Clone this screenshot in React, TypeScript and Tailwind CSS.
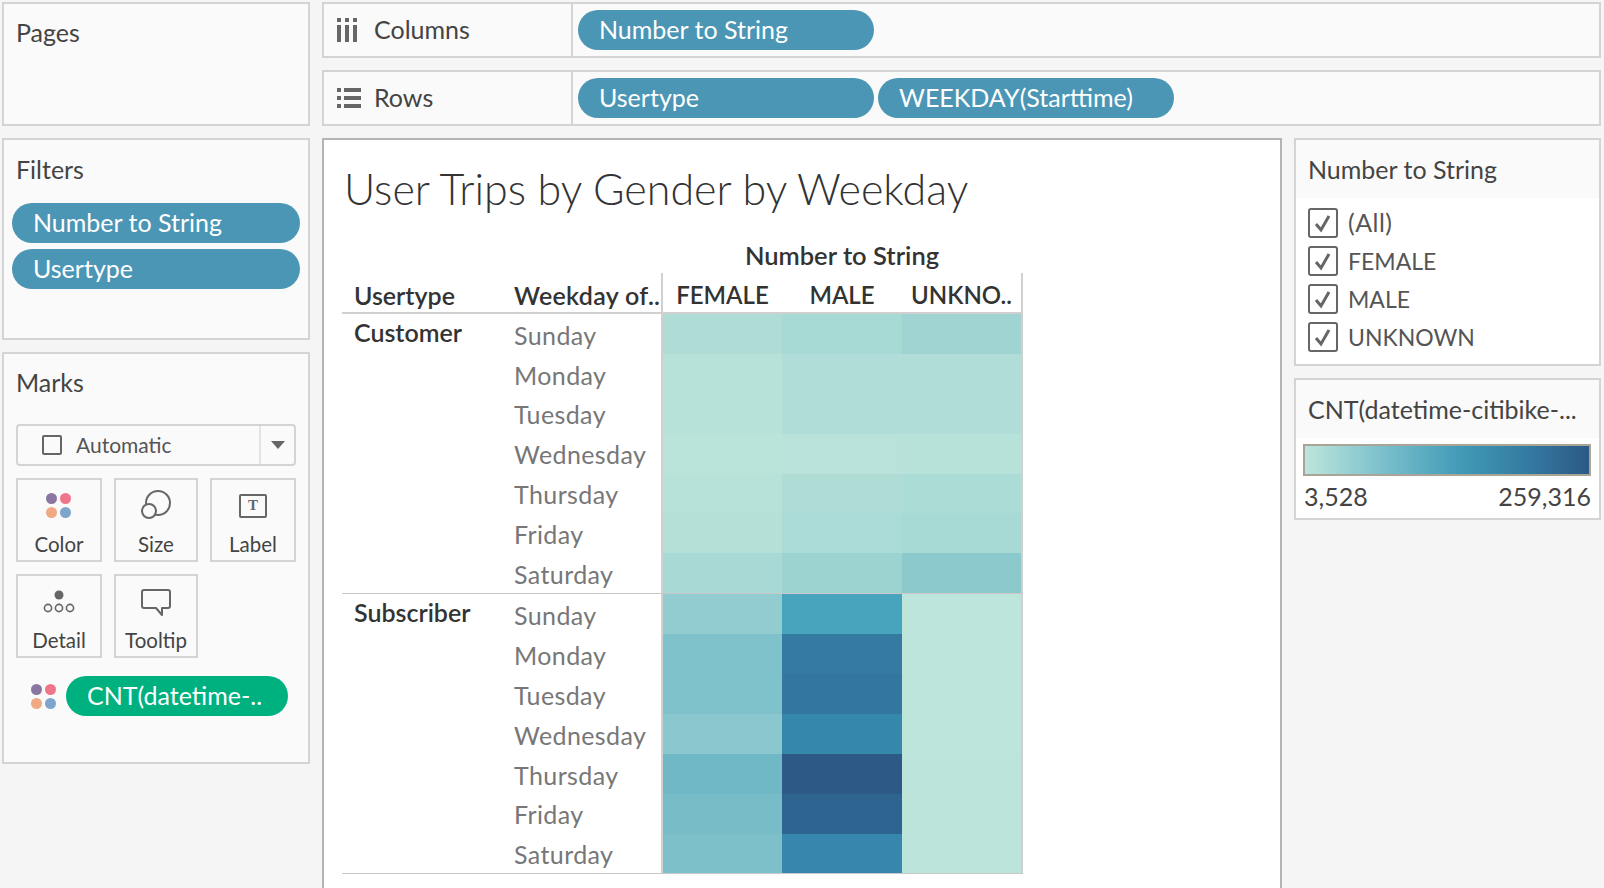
const FONT = "font-['Lato','Noto_Sans',sans-serif]"

const DAYS = ['Sunday', 'Monday', 'Tuesday', 'Wednesday', 'Thursday', 'Friday', 'Saturday']

const GROUPS = [
  {
    name: 'Customer',
    female: ['#b0dcd6', '#b7e2d9', '#b7e2d9', '#bae4da', '#b7e2d9', '#b5e0d8', '#a8d9d5'],
    male: ['#a7d9d5', '#b1ddd8', '#b1ddd8', '#b8e2da', '#b0dcd6', '#aadbd6', '#9cd3d1'],
    unknown: ['#9fd4d2', '#b1ddd8', '#b1ddd8', '#b7e2d9', '#acdcd6', '#a7d9d5', '#8cc9cd'],
  },
  {
    name: 'Subscriber',
    female: ['#92cbd0', '#80c2cb', '#80c2cb', '#8bc7cf', '#70b8c6', '#78bcc8', '#7dc0ca'],
    male: ['#48a3bc', '#357aa0', '#33779f', '#3688aa', '#2c5986', '#2e6590', '#3686ae'],
    unknown: ['#bde5db', '#bde5db', '#bde5db', '#bde5db', '#bce4da', '#bce4da', '#bce4da'],
  },
]

function Pill({ label, className }: { label: string; className: string }) {
  return (
    <div className={`flex h-10 items-center rounded-full bg-[#4b96b5] pl-[21px] text-[25px] text-white ${className}`}>
      {label}
    </div>
  )
}

function Dots({ className }: { className?: string }) {
  return (
    <svg width="26" height="26" viewBox="0 0 26 26" className={className}>
      <circle cx="6.5" cy="6.5" r="5.5" fill="#8b76a3" />
      <circle cx="20.5" cy="6.5" r="5.5" fill="#f0758a" />
      <circle cx="6.5" cy="20.5" r="5.5" fill="#f1a983" />
      <circle cx="20.5" cy="20.5" r="5.5" fill="#7ea6cc" />
    </svg>
  )
}

function MarkButton({ label, icon, width }: { label: string; icon: React.ReactNode; width: string }) {
  return (
    <div className={`flex h-[84px] flex-col items-center border-2 border-[#d4d4d4] ${width}`}>
      <div className="flex h-[42px] items-end justify-center">{icon}</div>
      <div className="mt-[11px] text-[20.5px] text-[#444]">{label}</div>
    </div>
  )
}

function Shelf({ icon, label, children }: { icon: React.ReactNode; label: string; children: React.ReactNode }) {
  return (
    <div className="flex h-14 border-2 border-[#d4d4d4] bg-[#fafafa]">
      <div className="flex w-[249px] items-center border-r-2 border-[#d4d4d4]">
        <div className="ml-[13px] flex w-[34px] justify-start">{icon}</div>
        <span className="ml-[3px] text-[25px] text-[#444]">{label}</span>
      </div>
      <div className="flex items-center gap-[4px] pl-[5px]">{children}</div>
    </div>
  )
}

function Check({ label, caps }: { label: string; caps?: boolean }) {
  return (
    <div className="flex h-[38px] items-center">
      <svg width="30" height="30" viewBox="0 0 30 30">
        <rect x="1" y="1" width="28" height="28" rx="2" fill="none" stroke="#666" strokeWidth="2" />
        <path d="M8 16l5 6 8-14" fill="none" stroke="#666" strokeWidth="3" />
      </svg>
      <span className={`ml-[10px] text-[#555] ${caps ? 'text-[23px]' : 'text-[25px] tracking-[0.5px]'}`}>{label}</span>
    </div>
  )
}

export default function App() {
  return (
    <div className={`flex h-[888px] w-[1604px] gap-[12px] overflow-hidden bg-[#f5f5f5] pt-[2px] pr-[3px] pl-[2px] ${FONT}`}>
      <div className="flex w-[308px] shrink-0 flex-col gap-3">
        <div className="h-[124px] border-2 border-[#d4d4d4] bg-[#fafafa] pt-[10px] pl-3 text-[25px] text-[#444]">Pages</div>

        <div className="h-[202px] border-2 border-[#d4d4d4] bg-[#fafafa]">
          <div className="pt-[11px] pl-3 text-[25px] text-[#444]">Filters</div>
          <div className="mt-[14px] flex flex-col gap-[6px] px-2">
            <Pill label="Number to String" className="w-full" />
            <Pill label="Usertype" className="w-full" />
          </div>
        </div>

        <div className="h-[412px] border-2 border-[#d4d4d4] bg-[#fafafa] px-3">
          <div className="pt-[10px] text-[25px] text-[#444]">Marks</div>
          <div className="mt-[22px] flex h-[42px] items-center rounded-sm border-2 border-[#d4d4d4]">
            <div className="flex flex-1 items-center pl-[24px]">
              <div className="h-5 w-5 rounded-[2px] border-2 border-[#666]" />
              <span className="ml-[14px] text-[21px] text-[#555]">Automatic</span>
            </div>
            <div className="flex h-full w-[35px] items-center justify-center border-l-2 border-[#e4e4e4]">
              <div className="h-0 w-0 border-x-[7px] border-t-[8px] border-x-transparent border-t-[#666]" />
            </div>
          </div>
          <div className="mt-3 flex gap-3">
            <MarkButton label="Color" width="w-[86px]" icon={<Dots className="mr-[3px]" />} />
            <MarkButton
              label="Size"
              width="w-[84px]"
              icon={
                <svg width="30" height="30" viewBox="0 0 30 30" fill="none" stroke="#666" strokeWidth="2" className="mb-[-2px]">
                  <circle cx="17" cy="13" r="12" />
                  <circle cx="8" cy="21" r="7" fill="#fafafa" />
                </svg>
              }
            />
            <MarkButton
              label="Label"
              width="w-[86px]"
              icon={
                <div className="flex h-6 w-7 items-center justify-center rounded-[2px] border-2 border-[#666] font-['Liberation_Serif',serif] text-[15px] font-bold leading-none text-[#666]">
                  T
                </div>
              }
            />
          </div>
          <div className="mt-3 flex gap-3">
            <MarkButton
              label="Detail"
              width="w-[86px]"
              icon={
                <svg width="32" height="24" viewBox="0 0 32 24" fill="none" stroke="#666" strokeWidth="1.6">
                  <circle cx="16" cy="5" r="4.5" fill="#666" stroke="none" />
                  <circle cx="5" cy="18" r="3.6" />
                  <circle cx="16" cy="18" r="3.6" />
                  <circle cx="27" cy="18" r="3.6" />
                </svg>
              }
            />
            <MarkButton
              label="Tooltip"
              width="w-[84px]"
              icon={
                <svg width="30" height="28" viewBox="0 0 30 28" fill="none" stroke="#666" strokeWidth="2" strokeLinejoin="round" className="mb-[-3px]">
                  <path d="M3 1h24a2 2 0 0 1 2 2v14a2 2 0 0 1-2 2h-6v7l-6-7H3a2 2 0 0 1-2-2V3a2 2 0 0 1 2-2z" />
                </svg>
              }
            />
          </div>
          <div className="mt-[18px] flex items-center gap-[10px] pl-[14px]">
            <Dots />
            <div className="flex h-10 w-[222px] items-center rounded-full bg-[#00b180] pl-[21px] text-[25px] text-white">CNT(datetime-..</div>
          </div>
        </div>
      </div>

      <div className="flex min-w-0 flex-1 flex-col gap-3">
        <Shelf
          label="Columns"
          icon={
            <svg width="20" height="24" viewBox="0 0 20 24" fill="#666">
              <rect x="0" y="0" width="4" height="4" />
              <rect x="8" y="0" width="4" height="4" />
              <rect x="16" y="0" width="4" height="4" />
              <rect x="0" y="7" width="4" height="17" />
              <rect x="8" y="7" width="4" height="17" />
              <rect x="16" y="7" width="4" height="17" />
            </svg>
          }
        >
          <Pill label="Number to String" className="w-[296px]" />
        </Shelf>
        <Shelf
          label="Rows"
          icon={
            <svg width="24" height="20" viewBox="0 0 24 20" fill="#666">
              <rect x="0" y="0" width="4" height="4" />
              <rect x="0" y="8" width="4" height="4" />
              <rect x="0" y="16" width="4" height="4" />
              <rect x="7" y="0" width="17" height="4" />
              <rect x="7" y="8" width="17" height="4" />
              <rect x="7" y="16" width="17" height="4" />
            </svg>
          }
        >
          <Pill label="Usertype" className="w-[296px]" />
          <Pill label="WEEKDAY(Starttime)" className="w-[296px]" />
        </Shelf>

        <div className="flex min-h-0 flex-1 gap-[12px]">
          <div className="w-[960px] shrink-0 border-x-2 border-t-2 border-[#b4b4b4] bg-white pt-[24px] pl-[20px]">
            <div className="text-[43px] leading-[50px] font-light whitespace-nowrap text-[#333]">User Trips by Gender by Weekday</div>
            <div className="mt-[27px] -ml-[2px] w-[681px]">
              <div className="ml-[319px] pb-[4px] text-center text-[25.5px] leading-[28px] font-semibold text-[#333]">Number to String</div>
              <div className="flex h-[41px] border-b-2 border-[#d0d0d0]">
                <div className="w-[172px] pt-[4px] pl-[12px] text-[25px] font-semibold text-[#333]">Usertype</div>
                <div className="w-[147px] pt-[4px] text-[25px] tracking-[0.3px] font-semibold whitespace-nowrap text-[#333]">Weekday of..</div>
                <div className="flex flex-1 border-x-2 border-[#d0d0d0] text-[24px] font-semibold text-[#333]">
                  <div className="w-[119px] pt-[4px] text-center">FEMALE</div>
                  <div className="w-[120px] pt-[4px] text-center">MALE</div>
                  <div className="flex-1 pt-[4px] text-center">UNKNO..</div>
                </div>
              </div>
              {GROUPS.map((g) => (
                <div key={g.name} className="flex border-b border-[#c8c8c8]">
                  <div className="w-[172px] pl-[12px] text-[25px] font-semibold text-[#333]">{g.name}</div>
                  <div className="w-[147px]">
                    {DAYS.map((d) => (
                      <div key={d} className="flex h-[39.9px] items-center pt-[3px] text-[25px] tracking-[0.4px] text-[#777]">
                        {d}
                      </div>
                    ))}
                  </div>
                  <div className="flex flex-1 border-x-2 border-[#d0d0d0]">
                    {[g.female, g.male, g.unknown].map((col, i) => (
                      <div key={i} className={i === 2 ? 'flex-1' : i === 0 ? 'w-[119px]' : 'w-[120px]'}>
                        {col.map((c, j) => (
                          <div key={j} className="h-[39.9px]" style={{ backgroundColor: c }} />
                        ))}
                      </div>
                    ))}
                  </div>
                </div>
              ))}
            </div>
          </div>

          <div className="flex flex-1 flex-col gap-[12px]">
            <div className="h-[228px] border-2 border-[#d4d4d4] bg-white">
              <div className="h-[58px] bg-[#fafafa] pt-[11px] pl-3 text-[25px] text-[#444]">Number to String</div>
              <div className="pt-[6px] pl-3">
                <Check label="(All)" />
                <Check label="FEMALE" caps />
                <Check label="MALE" caps />
                <Check label="UNKNOWN" caps />
              </div>
            </div>
            <div className="h-[142px] border-2 border-[#d4d4d4] bg-white">
              <div className="h-[58px] bg-[#fafafa] pt-[11px] pl-3 text-[25px] whitespace-nowrap text-[#444]">CNT(datetime-citibike-...</div>
              <div className="mt-[6px] mr-[8px] ml-[7px] h-8 border-2 border-[#a8a498] bg-[linear-gradient(to_right,#bde5db,#75bccb_30%,#419ab7_55%,#33789f_80%,#2c5986)]" />
              <div className="mr-[8px] ml-[8px] flex justify-between pt-[2px] text-[25px] text-[#444]">
                <span>3,528</span>
                <span>259,316</span>
              </div>
            </div>
          </div>
        </div>
      </div>
    </div>
  )
}
